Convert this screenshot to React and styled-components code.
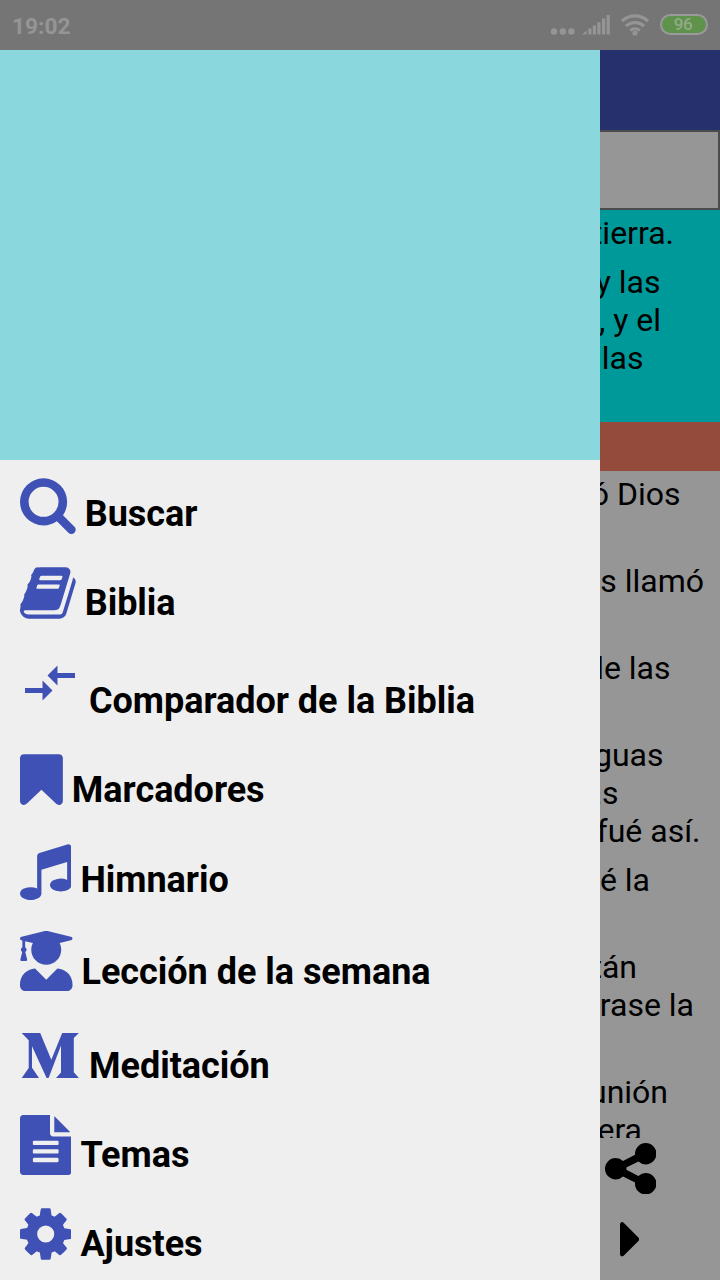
import styled, { createGlobalStyle } from 'styled-components'
import { FaUserGraduate } from 'react-icons/fa'
import { MdCompareArrows } from 'react-icons/md'

const SearchIcon = () => <svg width="55.71" height="60" viewBox="64 0 1664 1792" fill="currentColor">
    <path d="M1216 832q0-185-131.5-316.5t-316.5-131.5-316.5 131.5-131.5 316.5 131.5 316.5 316.5 131.5 316.5-131.5 131.5-316.5zm512 832q0 52-38 90t-90 38q-54 0-90-38l-343-342q-179 124-399 124-143 0-273.5-55.5t-225-150-150-225-55.5-273.5 55.5-273.5 150-225 225-150 273.5-55.5 273.5 55.5 225 150 150 225 55.5 273.5q0 220-124 399l343 343q37 37 37 90z" />
</svg>

const BookIcon = () => <svg width="55.71" height="60" viewBox="64 0 1664 1792" fill="currentColor">
    <path d="M1703 478q40 57 18 129l-275 906q-19 64-76.5 107.5t-122.5 43.5h-923q-77 0-148.5-53.5t-99.5-131.5q-24-67-2-127 0-4 3-27t4-37q1-8-3-21.5t-3-19.5q2-11 8-21t16.5-23.5 16.5-23.5q23-38 45-91.5t30-91.5q3-10 .5-30t-.5-28q3-11 17-28t17-23q21-36 42-92t25-90q1-9-2.5-32t.5-28q4-13 22-30.5t22-22.5q19-26 42.5-84.5t27.5-96.5q1-8-3-25.5t-2-26.5q2-8 9-18t18-23 17-21q8-12 16.5-30.5t15-35 16-36 19.5-32 26.5-23.5 36-11.5 47.5 5.5l-1 3q38-9 51-9h761q74 0 114 56t18 130l-274 906q-36 119-71.5 153.5t-128.5 34.5h-869q-27 0-38 15-11 16-1 43 24 70 144 70h923q29 0 56-15.5t35-41.5l300-987q7-22 5-57 38 15 59 43zm-1064 2q-4 13 2 22.5t20 9.5h608q13 0 25.5-9.5t16.5-22.5l21-64q4-13-2-22.5t-20-9.5h-608q-13 0-25.5 9.5t-16.5 22.5zm-83 256q-4 13 2 22.5t20 9.5h608q13 0 25.5-9.5t16.5-22.5l21-64q4-13-2-22.5t-20-9.5h-608q-13 0-25.5 9.5t-16.5 22.5z" />
</svg>

const BookmarkIcon = () => <svg width="42.86" height="60" viewBox="256 0 1280 1792" fill="currentColor">
    <path d="M1420 128q23 0 44 9 33 13 52.5 41t19.5 62v1289q0 34-19.5 62t-52.5 41q-19 8-44 8-48 0-83-32l-441-424-441 424q-36 33-83 33-23 0-44-9-33-13-52.5-41t-19.5-62v-1289q0-34 19.5-62t52.5-41q21-9 44-9h1048z" />
</svg>

const MusicIcon = () => <svg width="51.43" height="60" viewBox="128 0 1536 1792" fill="currentColor">
    <path d="M1664 224v1120q0 50-34 89t-86 60.5-103.5 32-96.5 10.5-96.5-10.5-103.5-32-86-60.5-34-89 34-89 86-60.5 103.5-32 96.5-10.5q105 0 192 39v-537l-768 237v709q0 50-34 89t-86 60.5-103.5 32-96.5 10.5-96.5-10.5-103.5-32-86-60.5-34-89 34-89 86-60.5 103.5-32 96.5-10.5q105 0 192 39v-967q0-31 19-56.5t49-35.5l832-256q12-4 28-4 40 0 68 28t28 68z" />
</svg>

const MediumIcon = () => <svg width="60" height="60" viewBox="0 0 60 60" fill="currentColor">
    <path d="M1.7 14.9H20.2L31.3 41.8 42.2 14.9H58.9L53.8 20V54.2L58.9 59.9H36L41 54.6V27.6L28.6 59.9H26.6L12 28.2V49.8L19 59.9H1.7L8.7 50V22.2Z" />
</svg>

const FileIcon = () => <svg width="51.43" height="60" viewBox="128 0 1536 1792" fill="currentColor">
    <path d="M1596 476q14 14 28 36h-472v-472q22 14 36 28zm-476 164h544v1056q0 40-28 68t-68 28h-1344q-40 0-68-28t-28-68v-1600q0-40 28-68t68-28h800v544q0 40 28 68t68 28zm160 736v-64q0-14-9-23t-23-9h-704q-14 0-23 9t-9 23v64q0 14 9 23t23 9h704q14 0 23-9t9-23zm0-256v-64q0-14-9-23t-23-9h-704q-14 0-23 9t-9 23v64q0 14 9 23t23 9h704q14 0 23-9t9-23zm0-256v-64q0-14-9-23t-23-9h-704q-14 0-23 9t-9 23v64q0 14 9 23t23 9h704q14 0 23-9t9-23z" />
</svg>

const CogIcon = () => <svg width="51.43" height="60" viewBox="128 0 1536 1792" fill="currentColor">
    <path d="M1152 896q0-106-75-181t-181-75-181 75-75 181 75 181 181 75 181-75 75-181zm512-109v222q0 12-8 23t-20 13l-185 28q-19 54-39 91 35 50 107 138 10 12 10 25t-9 23q-27 37-99 108t-94 71q-12 0-26-9l-138-108q-44 23-91 38-16 136-29 186-7 28-36 28h-222q-14 0-24.5-8.5t-11.5-21.5l-28-184q-49-16-90-37l-141 107q-10 9-25 9-14 0-25-11-126-114-165-168-7-10-7-23 0-12 8-23 15-21 51-66.5t54-70.5q-27-50-41-99l-183-27q-13-2-21-12.5t-8-23.5v-222q0-12 8-23t19-13l186-28q14-46 39-92-40-57-107-138-10-12-10-24 0-10 9-23 26-36 98.5-107.5t94.5-71.5q13 0 26 10l138 107q44-23 91-38 16-136 29-186 7-28 36-28h222q14 0 24.5 8.5t11.5 21.5l28 184q49 16 90 37l142-107q9-9 24-9 13 0 25 10 129 119 165 170 7 8 7 22 0 12-8 23-15 21-51 66.5t-54 70.5q26 50 41 98l183 28q13 2 21 12.5t8 23.5z" />
</svg>

const ShareIcon = () => <svg width="51.43" height="51.43" viewBox="128 128 1536 1536" fill="currentColor">
    <path d="M1344 1024q133 0 226.5 93.5t93.5 226.5-93.5 226.5-226.5 93.5-226.5-93.5-93.5-226.5q0-12 2-34l-360-180q-92 86-218 86-133 0-226.5-93.5t-93.5-226.5 93.5-226.5 226.5-93.5q126 0 218 86l360-180q-2-22-2-34 0-133 93.5-226.5t226.5-93.5 226.5 93.5 93.5 226.5-93.5 226.5-226.5 93.5q-126 0-218-86l-360 180q2 22 2 34t-2 34l360 180q92-86 218-86z" />
</svg>

const CaretIcon = () => <svg width="19.29" height="34.29" viewBox="576 384 576 1024" fill="currentColor">
    <path d="M1152 896q0 26-19 45l-448 448q-19 19-45 19t-45-19-19-45v-896q0-26 19-45t45-19 45 19l448 448q19 19 19 45z" />
</svg>

const StatusIcons = () => <svg width="106" height="24" viewBox="0 0 106 24" fill="currentColor">
    <circle cx="4" cy="18.5" r="3.2" />
    <circle cx="12.8" cy="18.5" r="3.2" />
    <circle cx="21.4" cy="18.5" r="3.2" />
    <path d="M32 21.5l4.7-4V21.5zM38.3 15.5h3.2v6h-3.2zM42.8 12.6h3.2v8.9h-3.2zM47.3 9.3h3.2v12.2h-3.2zM52 5.6h3.2v15.9h-3.2zM56.6 2h3.2v19.5h-3.2z" />
    <g fill="none" stroke="currentColor" strokeWidth="3.2">
        <path d="M72 8.2a18.5 18.5 0 0 1 26 0" />
        <path d="M76 13.2a13 13 0 0 1 18 0" />
        <path d="M80.2 17.6a7.2 7.2 0 0 1 9.6 0" />
    </g>
    <circle cx="85" cy="20" r="2.6" />
</svg>

const MENU_ARRAY = [
    { id: 1, name: "Buscar", height: 74, icon: <SearchIcon /> },
    { id: 2, name: "Biblia", height: 89, icon: <BookIcon /> },
    { id: 3, name: "Comparador de la Biblia", height: 98, icon: <MdCompareArrows size={60} />, lift: 8 },
    { id: 4, name: "Marcadores", height: 89, icon: <BookmarkIcon /> },
    { id: 5, name: "Himnario", height: 90, icon: <MusicIcon /> },
    { id: 6, name: "Lección de la semana", height: 92, icon: <FaUserGraduate size={60} />, lift: 1, width: 52.5 },
    { id: 7, name: "Meditación", height: 94, icon: <MediumIcon />, lift: 8 },
    { id: 8, name: "Temas", height: 89, icon: <FileIcon /> },
    { id: 9, name: "Ajustes", height: 89, icon: <CogIcon /> },
]

// end is the free space to the right of each line
const VERSE_ARRAY = [
    { id: 1, color: "#009999", lines: [{ text: "tierra.", end: 46 }] },
    { id: 2, color: "#009999", lines: [{ text: "y las", end: 59.5 }, { text: ", y el", end: 59 }, { text: "las", end: 76.5 }, {}] },
    { id: 3, color: "#954b3c", lines: [{}] },
    { id: 4, lines: [{ text: "ó Dios", end: 39.5 }, {}] },
    { id: 5, lines: [{ text: "s llamó", end: 16 }, {}] },
    { id: 6, lines: [{ text: "de las", end: 49.5 }, {}] },
    { id: 7, lines: [{ text: "guas", end: 56.5 }, { text: "as", end: 101.5 }, { text: "fué así.", end: 19.5 }] },
    { id: 8, lines: [{ text: "é la", end: 70 }, {}] },
    { id: 9, lines: [{ text: "tán", end: 83 }, { text: "rase la", end: 26 }, {}] },
    { id: 10, lines: [{ text: "unión", end: 52 }, { text: "era", end: 78 }] },
]

const GlobalStyle = createGlobalStyle`
* {
    box-sizing: border-box;
}
body {
    margin: 0;
    font-family: Roboto, "Liberation Sans", sans-serif;
}
svg {
    display: block;
    flex-shrink: 0;
}
`

const Wrapper = styled.div`
width: 720px;
height: 1280px;
display: flex;
flex-direction: column;
overflow: hidden;
background-color: #969696;
`

const StatusBar = styled.header`
height: 50px;
flex-shrink: 0;
display: flex;
justify-content: space-between;
align-items: center;
padding: 0 12px;
color: #959595;
background-color: #757575;
`

const Clock = styled.div`
font-size: 22.7px;
font-weight: bold;
padding-top: 3px;
`

const StatusRight = styled.div`
display: flex;
align-items: center;
gap: 4px;
`

const Battery = styled.div`
width: 48px;
height: 21px;
border: 2px solid #9a9a9a;
border-radius: 11px;
background-color: #5f924a;
background-clip: padding-box;
color: #92aa87;
font-size: 17px;
font-weight: 500;
letter-spacing: -0.5px;
line-height: 17px;
text-align: center;
padding-right: 2px;
margin-bottom: 1px;
`

const Body = styled.main`
display: grid;
grid-template-columns: 600px 120px;
height: 1230px;
`

const Drawer = styled.aside`
background-color: #efefef;
overflow: hidden;
`

const Cover = styled.div`
height: 410px;
background-color: #8ad8dd;
`

const Menu = styled.nav`
padding-left: 20px;
`

const Item = styled.div`
height: ${(props) => props.$height}px;
display: flex;
align-items: flex-end;
gap: 9px;
`

const IconBox = styled.div`
width: ${(props) => props.$width ? props.$width + 'px' : 'auto'};
color: #3f51b5;
margin-bottom: ${(props) => props.$lift || 0}px;

svg {
    max-width: 100%;
}
`

const Label = styled.div`
font-size: 36px;
font-weight: bold;
line-height: 39px;
letter-spacing: -0.03px;
color: #000;
white-space: nowrap;
`

const Reader = styled.section`
display: flex;
flex-direction: column;
overflow: hidden;
`

const TopBar = styled.div`
height: 80px;
flex-shrink: 0;
background-color: #26306c;
`

const Picker = styled.div`
height: 80px;
flex-shrink: 0;
border: 2px solid #4b4b4b;
border-left: none;
`

const Passage = styled.article`
height: 928px;
flex-shrink: 0;
overflow: hidden;
`

const Verse = styled.div`
padding: 4px 0 7px;
background-color: ${(props) => props.$color || '#969696'};
`

const Line = styled.div`
height: 38px;
display: flex;
justify-content: flex-end;
padding-right: ${(props) => props.$end || 0}px;
font-size: 32px;
line-height: 38px;
white-space: pre;
color: #000;
`

const Actions = styled.footer`
padding: 5px 0 0 5px;
color: #000;
`

const Next = styled.div`
padding: 28px 0 0 15px;
`

const App = () => {
    return <Wrapper>
        <GlobalStyle />
        <StatusBar>
            <Clock>19:02</Clock>
            <StatusRight>
                <StatusIcons />
                <Battery>96</Battery>
            </StatusRight>
        </StatusBar>
        <Body>
            <Drawer>
                <Cover />
                <Menu>
                    {MENU_ARRAY.map((item) => <Item key={item.id} $height={item.height}>
                        <IconBox $lift={item.lift} $width={item.width}>{item.icon}</IconBox>
                        <Label>{item.name}</Label>
                    </Item>)}
                </Menu>
            </Drawer>
            <Reader>
                <TopBar />
                <Picker />
                <Passage>
                    {VERSE_ARRAY.map((verse) => <Verse key={verse.id} $color={verse.color}>
                        {verse.lines.map((line, i) => <Line key={i} $end={line.end}>{line.text}</Line>)}
                    </Verse>)}
                </Passage>
                <Actions>
                    <ShareIcon />
                    <Next><CaretIcon /></Next>
                </Actions>
            </Reader>
        </Body>
    </Wrapper>
}
export default App
